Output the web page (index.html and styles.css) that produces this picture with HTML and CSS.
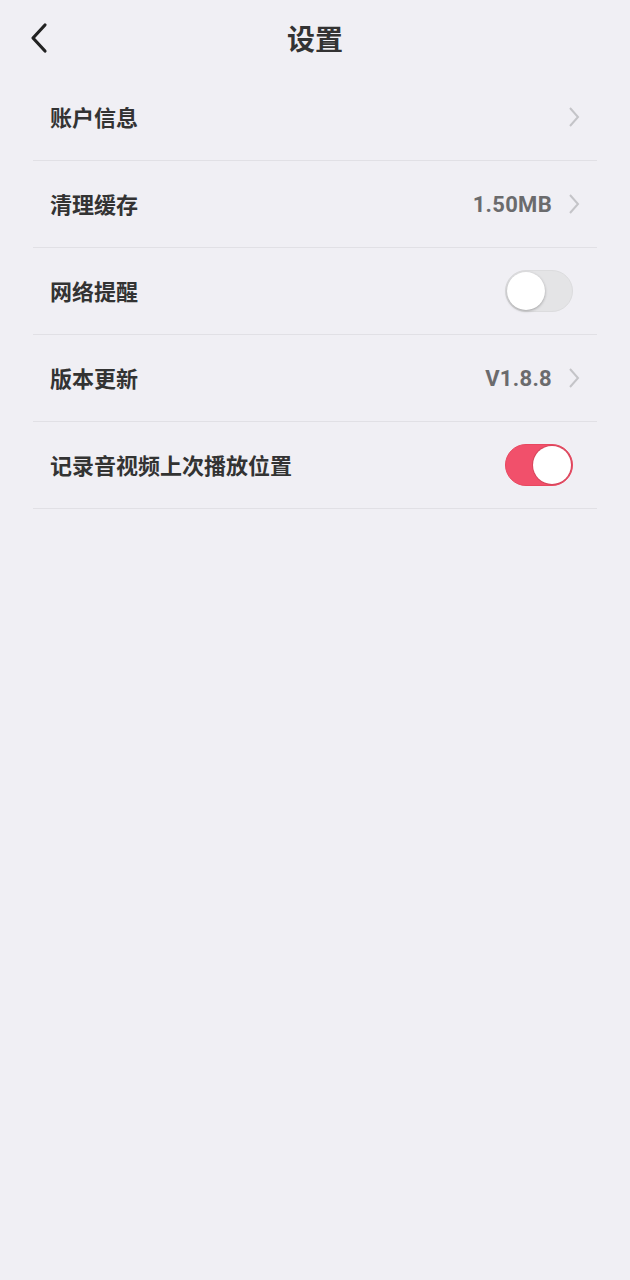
FILE: index.html
```html
<!DOCTYPE html>
<html lang="zh">
<head>
<meta charset="utf-8">
<link rel="stylesheet" href="styles.css">
</head>
<body>
<header class="header">
  <span class="back">
    <svg width="20" height="32" viewBox="0 0 20 32"><path d="M16 3 L4 16 L16 29" fill="none" stroke="#222" stroke-width="3.2" stroke-linecap="round" stroke-linejoin="round"/></svg>
  </span>
  <h1 class="title">设置</h1>
</header>
<ul class="list">
  <li class="row">
    <span class="label">账户信息</span>
    <span class="right"><span class="chev"><svg width="14" height="22" viewBox="0 0 14 22"><path d="M3 2 L11 11 L3 20" fill="none" stroke="#c4c4c8" stroke-width="2"/></svg></span></span>
  </li>
  <li class="row">
    <span class="label">清理缓存</span>
    <span class="right"><span class="value">1.50MB</span><span class="chev"><svg width="14" height="22" viewBox="0 0 14 22"><path d="M3 2 L11 11 L3 20" fill="none" stroke="#c4c4c8" stroke-width="2"/></svg></span></span>
  </li>
  <li class="row">
    <span class="label">网络提醒</span>
    <span class="right"><span class="toggle"><span class="knob"></span></span></span>
  </li>
  <li class="row">
    <span class="label">版本更新</span>
    <span class="right"><span class="value">V1.8.8</span><span class="chev"><svg width="14" height="22" viewBox="0 0 14 22"><path d="M3 2 L11 11 L3 20" fill="none" stroke="#c4c4c8" stroke-width="2"/></svg></span></span>
  </li>
  <li class="row">
    <span class="label">记录音视频上次播放位置</span>
    <span class="right"><span class="toggle on"><span class="knob"></span></span></span>
  </li>
</ul>
</body>
</html>
```

FILE: styles.css
```css
* { box-sizing: border-box; }
html, body { margin: 0; padding: 0; }
body {
  background: #f0eff4;
  font-family: "Noto Sans CJK SC", "Noto Sans", sans-serif;
  color: #333;
  width: 630px;
  min-height: 1280px;
}
.header {
  height: 74px;
  display: flex;
  align-items: center;
  justify-content: center;
  position: relative;
}
.back {
  position: absolute;
  left: 29px;
  top: 22px;
  display: flex;
}
.title {
  margin: 0;
  font-size: 28px;
  font-weight: 700;
  color: #333;
  line-height: 1;
  margin-top: 1px;
}
.list {
  list-style: none;
  margin: 0 33px;
  padding: 0;
}
.row {
  height: 87px;
  border-bottom: 1px solid #e1e0e5;
  display: flex;
  align-items: center;
  justify-content: space-between;
  padding: 0 16px 0 17px;
}
.label {
  font-size: 22px;
  font-weight: 700;
  color: #333;
  line-height: 1;
  margin-bottom: 2px;
}
.right {
  display: flex;
  align-items: center;
}
.value {
  font-family: Roboto, "Liberation Sans", sans-serif;
  font-size: 22px;
  font-weight: 700;
  color: #6b6b6d;
  margin-right: 15px;
  letter-spacing: 0.3px;
}
.chev { display: flex; }
.toggle {
  width: 68px;
  height: 42px;
  border-radius: 21px;
  background: #e4e4e6;
  border: 1px solid #dcdcde;
  position: relative;
  margin-right: 8px;
  display: block;
}
.knob {
  position: absolute;
  left: 1px;
  top: 1px;
  width: 38px;
  height: 38px;
  border-radius: 50%;
  background: #fff;
  box-shadow: 0 1px 3px rgba(0,0,0,0.3);
}
.toggle.on {
  background: #f1506b;
  border-color: #e8485f;
}
.toggle.on .knob {
  left: 27px;
  box-shadow: 0 0 0 1px #d7465c;
}
```
